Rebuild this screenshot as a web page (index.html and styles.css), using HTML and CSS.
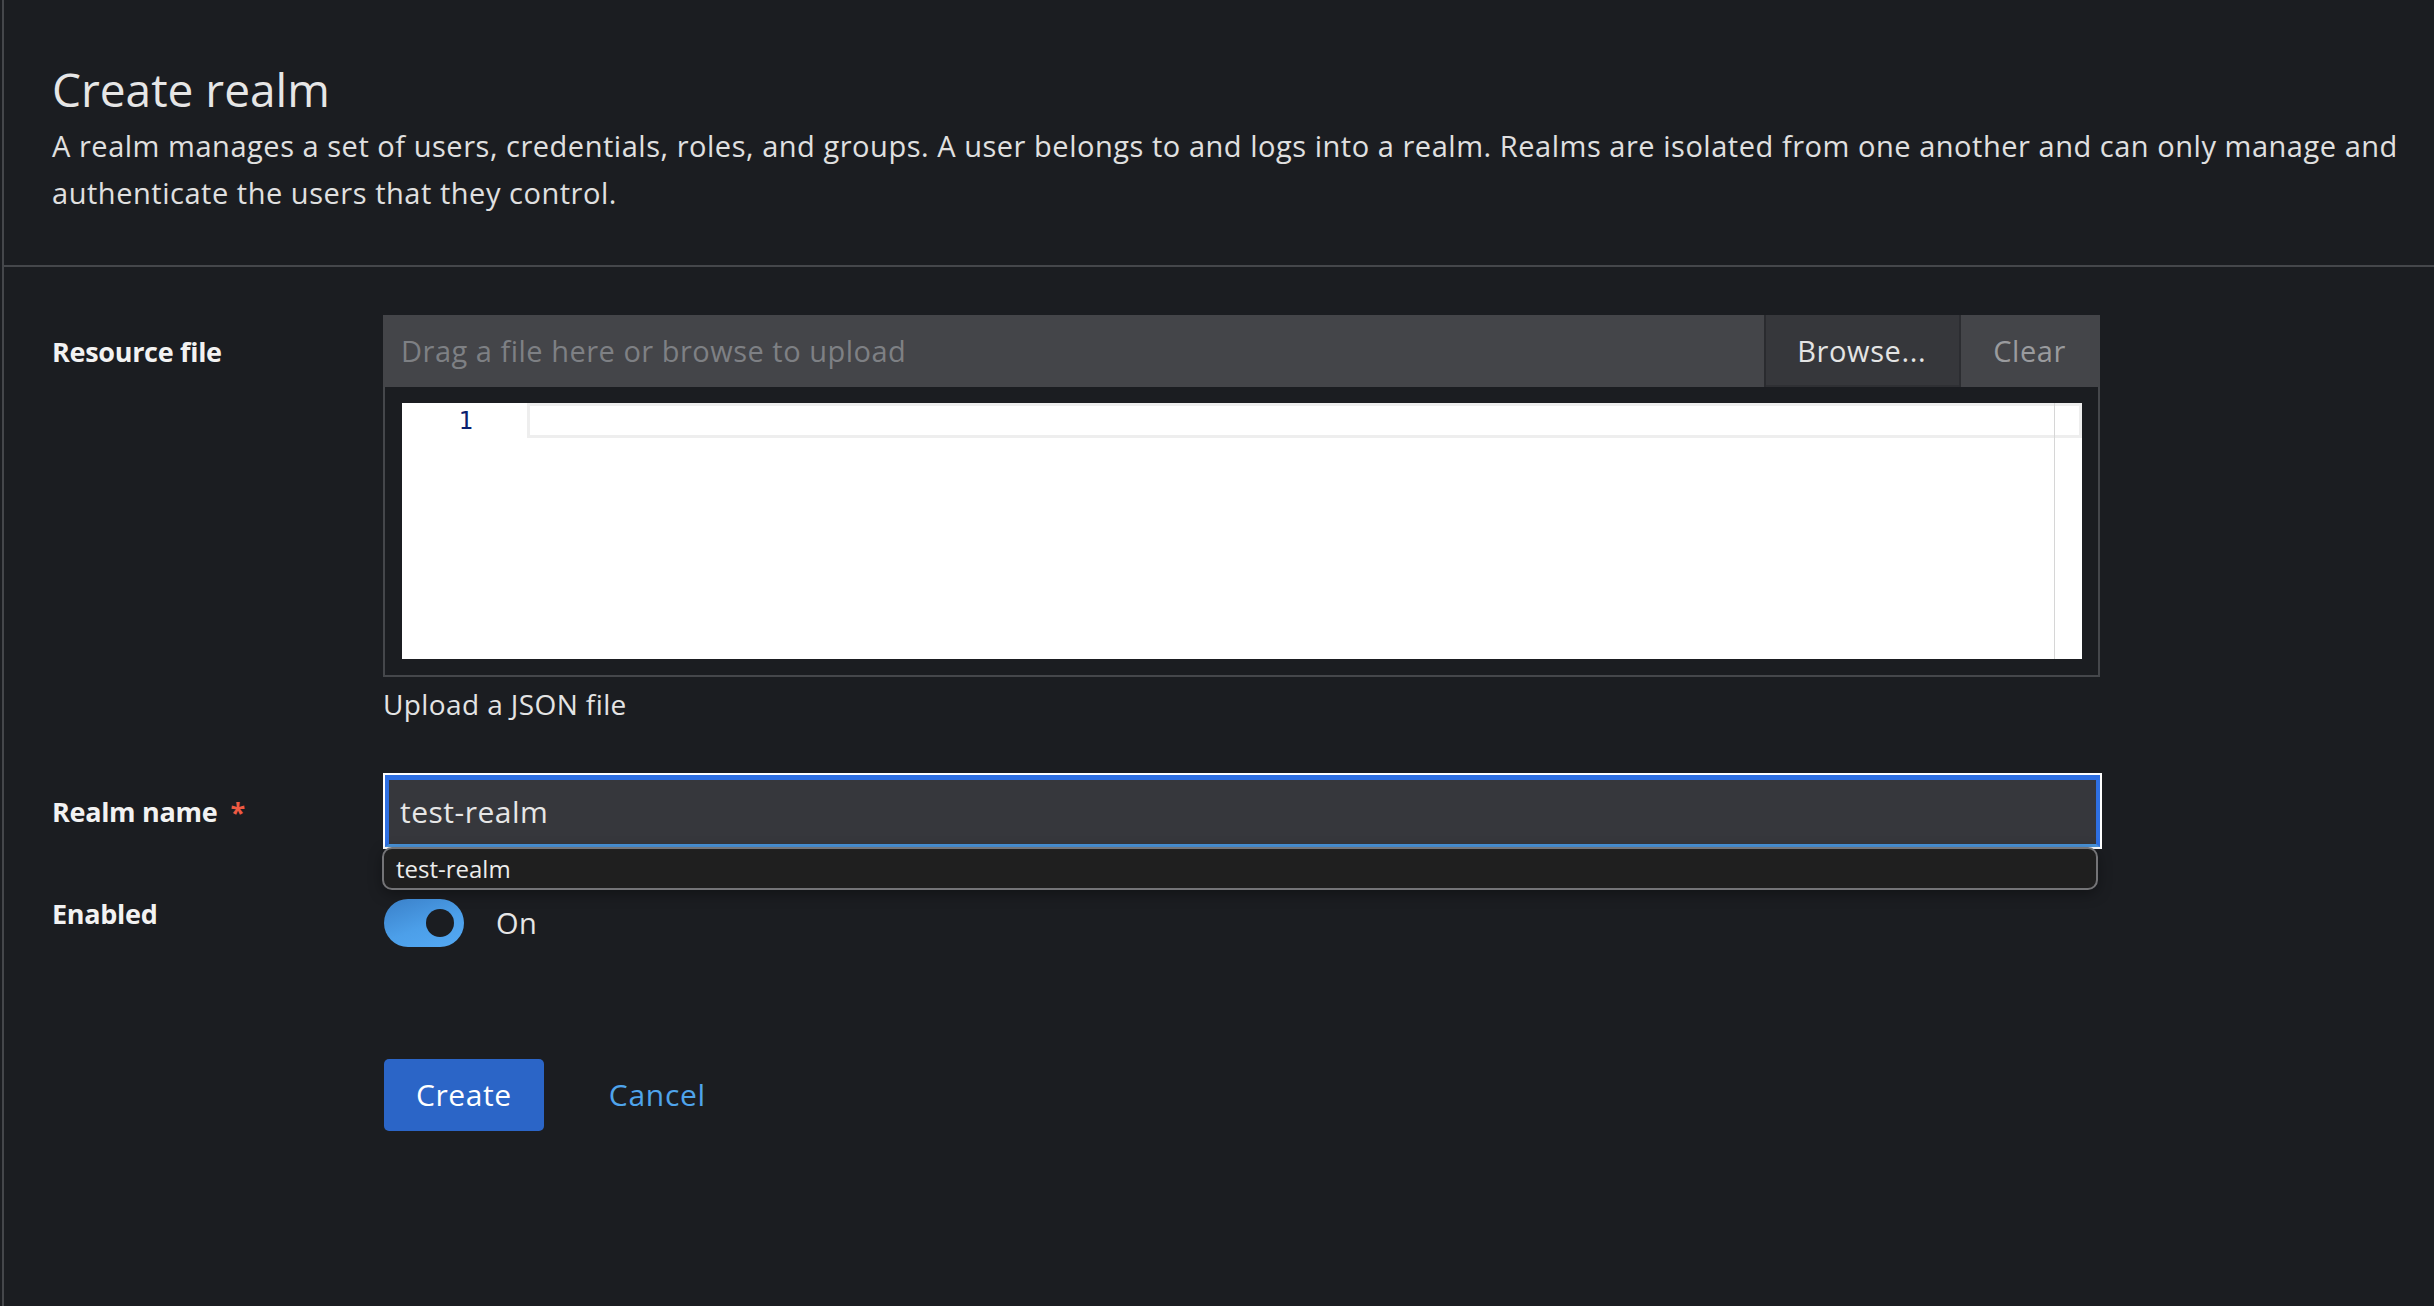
FILE: index.html
```html
<!DOCTYPE html>
<html lang="en">
<head>
<meta charset="utf-8">
<title>Create realm</title>
<link rel="stylesheet" href="styles.css">
</head>
<body>
<div class="shell">
  <header class="page-header">
    <h1 class="title">Create realm</h1>
    <p class="desc">A realm manages a set of users, credentials, roles, and groups. A user belongs to and logs into a realm. Realms are isolated from one another and can only manage and authenticate the users that they control.</p>
  </header>
  <main class="form-section">
    <div class="form-row row-resource">
      <div class="label">Resource file</div>
      <div class="control">
        <div class="upload">
          <div class="upload-bar">
            <div class="upload-input">Drag a file here or browse to upload</div>
            <div class="btn-browse">Browse...</div>
            <div class="btn-clear">Clear</div>
          </div>
          <div class="editor-frame">
            <div class="editor">
              <div class="gutter"><span class="line-no">1</span></div>
              <div class="lines"><div class="current-line"></div></div>
              <div class="scroll-line"></div>
            </div>
          </div>
        </div>
        <div class="helper">Upload a JSON file</div>
      </div>
    </div>

    <div class="form-row row-name">
      <div class="label">Realm name<span class="required">*</span></div>
      <div class="control">
        <div class="name-input">test-realm</div>
        <div class="autofill"><span class="autofill-item">test-realm</span></div>
      </div>
    </div>

    <div class="form-row row-enabled">
      <div class="label">Enabled</div>
      <div class="control switch-row">
        <div class="switch"><span class="knob"></span></div>
        <span class="switch-label">On</span>
      </div>
    </div>

    <div class="form-row row-actions">
      <div class="label"></div>
      <div class="control actions">
        <div class="btn-primary">Create</div>
        <div class="btn-link">Cancel</div>
      </div>
    </div>
  </main>
</div>
</body>
</html>
```

FILE: styles.css
```css
* { box-sizing: border-box; }

html, body {
  margin: 0;
  padding: 0;
  background: #1b1d21;
}

body {
  font-family: "Open Sans", "Liberation Sans", sans-serif;
  color: #e0e0e0;
  width: 2434px;
  height: 1306px;
  overflow: hidden;
}

.shell {
  margin-left: 2px;
  border-left: 2px solid #45474b;
  height: 1306px;
}

/* header */
.page-header {
  padding: 61px 20px 49px 48px;
  border-bottom: 2px solid #45474b;
}

.title {
  margin: 0;
  font-size: 46px;
  line-height: 56px;
  font-weight: 400;
  color: #e6e6e6;
}

.desc {
  margin: 5px 0 0 0;
  font-size: 29px;
  letter-spacing: 0.53px;
  line-height: 47px;
  color: #e0e0e0;
}

/* form */
.form-section {
  padding: 48px 0 0 48px;
}

.form-row {
  display: flex;
  align-items: flex-start;
}

.label {
  width: 331px;
  flex: none;
  padding-top: 16px;
  font-size: 27px;
  line-height: 42px;
  font-weight: 700;
  letter-spacing: -0.3px;
  color: #f2f2f2;
}

.control {
  width: 1717px;
  flex: none;
  position: relative;
}

/* upload */
.upload-bar {
  display: flex;
  height: 72px;
  background: #444549;
}

.upload-input {
  flex: 1;
  padding-left: 18px;
  font-size: 29px;
  letter-spacing: 0.5px;
  line-height: 72px;
  color: #7e8084;
}

.btn-browse,
.btn-clear {
  flex: none;
  padding: 0 33px;
  font-size: 29px;
  letter-spacing: 0.6px;
  line-height: 72px;
}

.btn-browse {
  background: #36373b;
  color: #e4e4e4;
  box-shadow: inset 2px 0 0 #2a2b2f, inset 0 -2px 0 #2f3034;
}

.btn-clear {
  padding: 0 34px;
  background: #444549;
  color: #9a9b9e;
  box-shadow: inset 2px 0 0 #2c2d31;
}

.editor-frame {
  border: 2px solid #45474b;
  border-top: 0;
  padding: 16px 16px 16px 17px;
}

.editor {
  position: relative;
  display: flex;
  height: 256px;
  background: #ffffff;
}

.gutter {
  width: 125px;
  flex: none;
  padding-right: 54px;
  text-align: right;
}

.line-no {
  display: block;
  font-family: "DejaVu Sans Mono", "Liberation Mono", monospace;
  font-size: 24px;
  line-height: 35px;
  padding-top: 1px;
  color: #0b216f;
}

.lines {
  flex: 1;
}

.current-line {
  height: 35px;
  border: 3px solid #eeeeee;
}

.scroll-line {
  position: absolute;
  top: 0;
  bottom: 0;
  left: 1652px;
  width: 1px;
  background: #d6d6d6;
}

.helper {
  margin-top: 6px;
  font-size: 28px;
  letter-spacing: 0.4px;
  line-height: 42px;
  color: #e4e4e4;
}

/* realm name */
.row-name {
  margin-top: 50px;
}

.required {
  margin-left: 13px;
  color: #ee5a43;
  font-weight: 700;
}

.name-input {
  margin-left: 2px;
  height: 72px;
  background: #36373c;
  border-style: solid;
  border-color: #2e6fe2;
  border-width: 5px 4px 3px 4px;
  border-bottom-color: #4a95dc;
  outline: 2px solid #ffffff;
  padding-left: 11px;
  font-size: 30px;
  letter-spacing: 0.5px;
  line-height: 64px;
  color: #e6e6e6;
}

.autofill {
  position: absolute;
  top: 72px;
  left: -1px;
  width: 1716px;
  height: 43px;
  background: #1f1f1f;
  border: 2px solid #747477;
  border-radius: 10px;
  box-shadow: 0 4px 14px rgba(0, 0, 0, 0.35);
  padding-left: 12px;
}

.autofill-item {
  display: block;
  font-size: 24px;
  line-height: 39px;
  color: #ececec;
}

/* enabled */
.row-enabled {
  margin-top: 46px;
}

.row-enabled .label {
  padding-top: 0;
}

.switch-row {
  display: flex;
  align-items: center;
  gap: 32px;
  margin-top: 6px;
}

.switch {
  position: relative;
  width: 80px;
  height: 48px;
  margin-left: 1px;
  border-radius: 24px;
  background: linear-gradient(160deg, #3a80c9 0%, #4c9fe9 55%, #54a9f4 100%);
}

.knob {
  position: absolute;
  left: 42px;
  top: 10px;
  width: 28px;
  height: 28px;
  border-radius: 50%;
  background: #1b1d21;
}

.switch-label {
  font-size: 29px;
  letter-spacing: 0.5px;
  line-height: 42px;
  color: #e6e6e6;
}

/* actions */
.row-actions {
  margin-top: 112px;
}

.row-actions .label {
  padding-top: 0;
}

.actions {
  display: flex;
  align-items: center;
  gap: 32px;
}

.btn-primary {
  margin-left: 1px;
  height: 72px;
  padding: 0 32px;
  border-radius: 5px;
  background: #2b65c7;
  color: #ffffff;
  font-size: 30px;
  letter-spacing: 0.6px;
  line-height: 72px;
}

.btn-link {
  padding: 0 33px;
  font-size: 30px;
  letter-spacing: 0.7px;
  line-height: 72px;
  color: #4fa4ec;
}
```
